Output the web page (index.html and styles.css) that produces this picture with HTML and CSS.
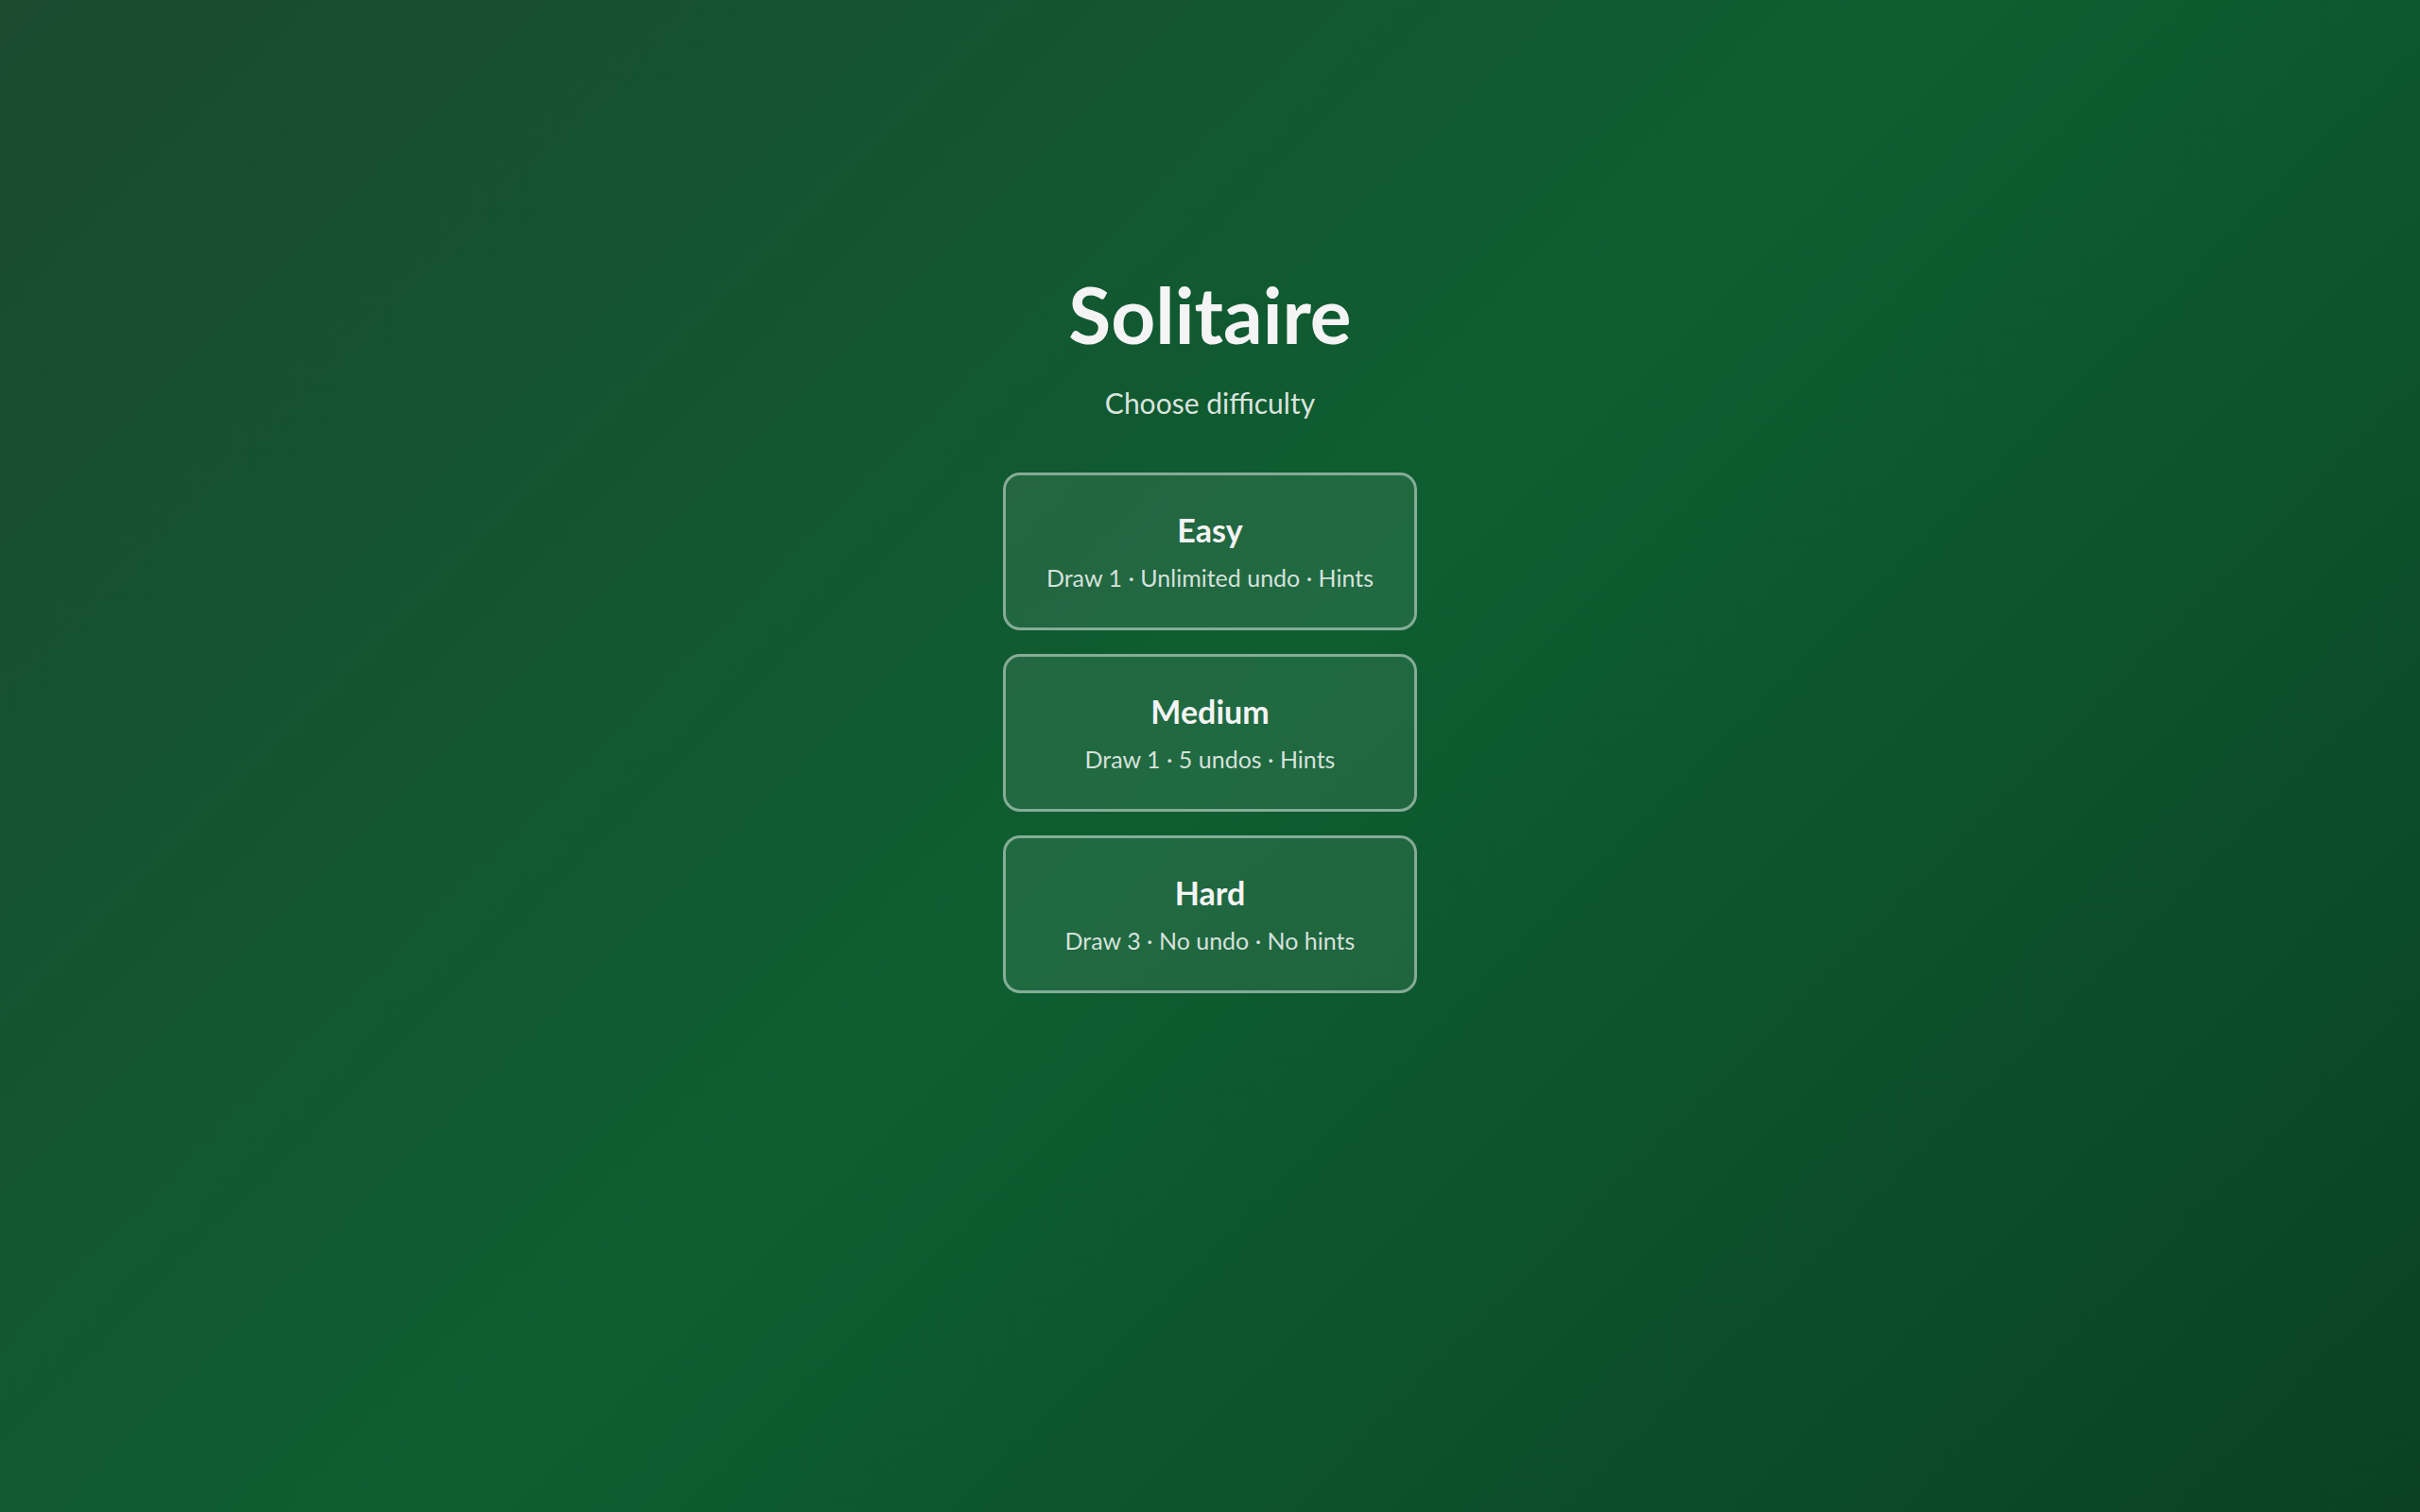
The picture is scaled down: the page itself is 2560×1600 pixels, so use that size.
FILE: index.html
```html
<!DOCTYPE html>
<html lang="en">

<head>
    <meta charset="utf-8">
    <title>Solitaire</title>
    <meta name="viewport" content="width=device-width, initial-scale=1.0">
    <link rel="stylesheet" href="styles.css">
</head>

<body>
    <main class="menu">
        <h1 class="title">Solitaire</h1>
        <p class="subtitle">Choose difficulty</p>
        <div class="levels">
            <button class="level">
                <span class="level-name">Easy</span>
                <span class="level-info">Draw 1 · Unlimited undo · Hints</span>
            </button>
            <button class="level">
                <span class="level-name">Medium</span>
                <span class="level-info">Draw 1 · 5 undos · Hints</span>
            </button>
            <button class="level">
                <span class="level-name">Hard</span>
                <span class="level-info">Draw 3 · No undo · No hints</span>
            </button>
        </div>
    </main>
</body>

</html>
```

FILE: styles.css
```css
:root {
    --fg-color: #f4f4f4;
    --muted-color: rgba(255, 255, 255, 0.85);
    --card-bg: rgba(255, 255, 255, 0.08);
    --card-border: rgba(255, 255, 255, 0.45);
}

* {
    margin: 0;
    padding: 0;
    box-sizing: border-box;
}

html,
body {
    height: 100vh;
}

body {
    font-family: Lato, 'Noto Sans', sans-serif;
    color: var(--fg-color);
    background: linear-gradient(135deg, #1b4a2f 0%, #0e5e31 50%, #0a4123 100%);
}

.menu {
    display: flex;
    flex-direction: column;
    align-items: center;
    padding-top: 286px;
}

.title {
    font-size: 82px;
    font-weight: 700;
    line-height: 92px;
}

.subtitle {
    font-size: 30px;
    line-height: 36px;
    margin-top: 30px;
    color: var(--muted-color);
}

.levels {
    display: flex;
    flex-direction: column;
    gap: 25px;
    margin-top: 56px;
}

.level {
    width: 438px;
    height: 167px;
    display: flex;
    flex-direction: column;
    align-items: center;
    justify-content: center;
    gap: 16px;
    font-family: inherit;
    color: var(--fg-color);
    background: var(--card-bg);
    border: 3px solid var(--card-border);
    border-radius: 18px;
    cursor: pointer;
}

.level:hover {
    background: rgba(255, 255, 255, 0.14);
}

.level-name {
    font-size: 34px;
    font-weight: 700;
    line-height: 38px;
}

.level-info {
    font-size: 25px;
    line-height: 30px;
    color: rgba(255, 255, 255, 0.82);
}
```
